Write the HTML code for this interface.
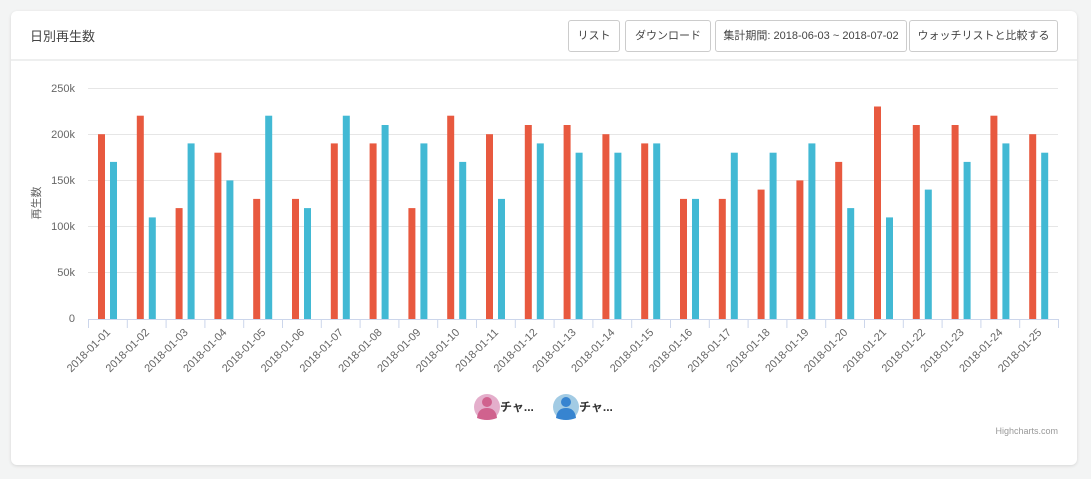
<!DOCTYPE html>
<html><head><meta charset="utf-8"><style>
body{margin:0;width:1091px;height:479px;background:#f3f4f4;font-family:"Liberation Sans","Noto Sans CJK JP",sans-serif;overflow:hidden;position:relative}
.card{position:absolute;left:11px;top:11px;width:1066px;height:454px;background:#fff;border-radius:6px;box-shadow:0 1px 3px rgba(0,0,0,.12)}
.hdr{height:48px;border-bottom:2px solid #eeefef;position:relative}
.title{position:absolute;left:19px;top:15px;font-size:13px;color:#444}
.btn{position:absolute;top:9px;height:32px;border:1px solid #ccc;border-radius:3px;font-size:11px;color:#444;line-height:30px;text-align:center;box-sizing:border-box;white-space:nowrap;overflow:hidden}
svg{position:absolute;left:0;top:0}
</style></head><body>
<div class="card"><div class="hdr"><div class="title">日別再生数</div>
<div class="btn" style="left:557px;width:52px">リスト</div>
<div class="btn" style="left:614px;width:86px">ダウンロード</div>
<div class="btn" style="left:704px;width:192px">集計期間: 2018-06-03 ~ 2018-07-02</div>
<div class="btn" style="left:898px;width:149px">ウォッチリストと比較する</div>
</div></div>
<svg width="1091" height="479" font-family="Liberation Sans, sans-serif">
<g stroke="#e6e6e6" stroke-width="1">
<line x1="88" x2="1058" y1="88.5" y2="88.5"/><line x1="88" x2="1058" y1="134.5" y2="134.5"/><line x1="88" x2="1058" y1="180.5" y2="180.5"/><line x1="88" x2="1058" y1="226.5" y2="226.5"/><line x1="88" x2="1058" y1="272.5" y2="272.5"/></g>
<g font-size="11" fill="#666" text-anchor="end">
<text x="75" y="92">250k</text><text x="75" y="138">200k</text><text x="75" y="184">150k</text><text x="75" y="230">100k</text><text x="75" y="276">50k</text><text x="75" y="322">0</text></g>
<text x="40" y="203" font-size="11" fill="#666" text-anchor="middle" transform="rotate(-90 40 203)" font-family="Liberation Sans, Noto Sans CJK JP, sans-serif">再生数</text>
<g fill="#e8593f">
<rect x="98" y="134.2" width="7" height="184.8"/><rect x="136.8" y="115.7" width="7" height="203.3"/><rect x="175.6" y="208.1" width="7" height="110.9"/><rect x="214.4" y="152.7" width="7" height="166.3"/><rect x="253.2" y="198.9" width="7" height="120.1"/><rect x="292" y="198.9" width="7" height="120.1"/><rect x="330.8" y="143.4" width="7" height="175.6"/><rect x="369.6" y="143.4" width="7" height="175.6"/><rect x="408.4" y="208.1" width="7" height="110.9"/><rect x="447.2" y="115.7" width="7" height="203.3"/><rect x="486" y="134.2" width="7" height="184.8"/><rect x="524.8" y="125" width="7" height="194"/><rect x="563.6" y="125" width="7" height="194"/><rect x="602.4" y="134.2" width="7" height="184.8"/><rect x="641.2" y="143.4" width="7" height="175.6"/><rect x="680" y="198.9" width="7" height="120.1"/><rect x="718.8" y="198.9" width="7" height="120.1"/><rect x="757.6" y="189.6" width="7" height="129.4"/><rect x="796.4" y="180.4" width="7" height="138.6"/><rect x="835.2" y="161.9" width="7" height="157.1"/><rect x="874" y="106.5" width="7" height="212.5"/><rect x="912.8" y="125" width="7" height="194"/><rect x="951.6" y="125" width="7" height="194"/><rect x="990.4" y="115.7" width="7" height="203.3"/><rect x="1029.2" y="134.2" width="7" height="184.8"/></g>
<g fill="#42b9d4">
<rect x="110" y="161.9" width="7" height="157.1"/><rect x="148.8" y="217.4" width="7" height="101.6"/><rect x="187.6" y="143.4" width="7" height="175.6"/><rect x="226.4" y="180.4" width="7" height="138.6"/><rect x="265.2" y="115.7" width="7" height="203.3"/><rect x="304" y="208.1" width="7" height="110.9"/><rect x="342.8" y="115.7" width="7" height="203.3"/><rect x="381.6" y="125" width="7" height="194"/><rect x="420.4" y="143.4" width="7" height="175.6"/><rect x="459.2" y="161.9" width="7" height="157.1"/><rect x="498" y="198.9" width="7" height="120.1"/><rect x="536.8" y="143.4" width="7" height="175.6"/><rect x="575.6" y="152.7" width="7" height="166.3"/><rect x="614.4" y="152.7" width="7" height="166.3"/><rect x="653.2" y="143.4" width="7" height="175.6"/><rect x="692" y="198.9" width="7" height="120.1"/><rect x="730.8" y="152.7" width="7" height="166.3"/><rect x="769.6" y="152.7" width="7" height="166.3"/><rect x="808.4" y="143.4" width="7" height="175.6"/><rect x="847.2" y="208.1" width="7" height="110.9"/><rect x="886" y="217.4" width="7" height="101.6"/><rect x="924.8" y="189.6" width="7" height="129.4"/><rect x="963.6" y="161.9" width="7" height="157.1"/><rect x="1002.4" y="143.4" width="7" height="175.6"/><rect x="1041.2" y="152.7" width="7" height="166.3"/></g>
<line x1="88" x2="1059" y1="319.5" y2="319.5" stroke="#ccd6eb"/>
<g stroke="#ccd6eb">
<line x1="88.5" x2="88.5" y1="319" y2="328"/><line x1="127.3" x2="127.3" y1="319" y2="328"/><line x1="166.1" x2="166.1" y1="319" y2="328"/><line x1="204.9" x2="204.9" y1="319" y2="328"/><line x1="243.7" x2="243.7" y1="319" y2="328"/><line x1="282.5" x2="282.5" y1="319" y2="328"/><line x1="321.3" x2="321.3" y1="319" y2="328"/><line x1="360.1" x2="360.1" y1="319" y2="328"/><line x1="398.9" x2="398.9" y1="319" y2="328"/><line x1="437.7" x2="437.7" y1="319" y2="328"/><line x1="476.5" x2="476.5" y1="319" y2="328"/><line x1="515.3" x2="515.3" y1="319" y2="328"/><line x1="554.1" x2="554.1" y1="319" y2="328"/><line x1="592.9" x2="592.9" y1="319" y2="328"/><line x1="631.7" x2="631.7" y1="319" y2="328"/><line x1="670.5" x2="670.5" y1="319" y2="328"/><line x1="709.3" x2="709.3" y1="319" y2="328"/><line x1="748.1" x2="748.1" y1="319" y2="328"/><line x1="786.9" x2="786.9" y1="319" y2="328"/><line x1="825.7" x2="825.7" y1="319" y2="328"/><line x1="864.5" x2="864.5" y1="319" y2="328"/><line x1="903.3" x2="903.3" y1="319" y2="328"/><line x1="942.1" x2="942.1" y1="319" y2="328"/><line x1="980.9" x2="980.9" y1="319" y2="328"/><line x1="1019.7" x2="1019.7" y1="319" y2="328"/><line x1="1058.5" x2="1058.5" y1="319" y2="328"/></g>
<g font-size="11" fill="#666" text-anchor="end">
<text x="111" y="333" transform="rotate(-45 111 333)">2018-01-01</text><text x="149.8" y="333" transform="rotate(-45 149.8 333)">2018-01-02</text><text x="188.6" y="333" transform="rotate(-45 188.6 333)">2018-01-03</text><text x="227.4" y="333" transform="rotate(-45 227.4 333)">2018-01-04</text><text x="266.2" y="333" transform="rotate(-45 266.2 333)">2018-01-05</text><text x="305" y="333" transform="rotate(-45 305 333)">2018-01-06</text><text x="343.8" y="333" transform="rotate(-45 343.8 333)">2018-01-07</text><text x="382.6" y="333" transform="rotate(-45 382.6 333)">2018-01-08</text><text x="421.4" y="333" transform="rotate(-45 421.4 333)">2018-01-09</text><text x="460.2" y="333" transform="rotate(-45 460.2 333)">2018-01-10</text><text x="499" y="333" transform="rotate(-45 499 333)">2018-01-11</text><text x="537.8" y="333" transform="rotate(-45 537.8 333)">2018-01-12</text><text x="576.6" y="333" transform="rotate(-45 576.6 333)">2018-01-13</text><text x="615.4" y="333" transform="rotate(-45 615.4 333)">2018-01-14</text><text x="654.2" y="333" transform="rotate(-45 654.2 333)">2018-01-15</text><text x="693" y="333" transform="rotate(-45 693 333)">2018-01-16</text><text x="731.8" y="333" transform="rotate(-45 731.8 333)">2018-01-17</text><text x="770.6" y="333" transform="rotate(-45 770.6 333)">2018-01-18</text><text x="809.4" y="333" transform="rotate(-45 809.4 333)">2018-01-19</text><text x="848.2" y="333" transform="rotate(-45 848.2 333)">2018-01-20</text><text x="887" y="333" transform="rotate(-45 887 333)">2018-01-21</text><text x="925.8" y="333" transform="rotate(-45 925.8 333)">2018-01-22</text><text x="964.6" y="333" transform="rotate(-45 964.6 333)">2018-01-23</text><text x="1003.4" y="333" transform="rotate(-45 1003.4 333)">2018-01-24</text><text x="1042.2" y="333" transform="rotate(-45 1042.2 333)">2018-01-25</text></g>
<circle cx="487" cy="407" r="13" fill="#e4aecb"/>
<circle cx="487" cy="402" r="5" fill="#d0628e"/><path d="M477 418 Q478 408 487 408 Q496 408 497 418 Q487 422 477 418Z" fill="#d0628e"/>
<circle cx="566" cy="407" r="13" fill="#a2cbe4"/>
<circle cx="566" cy="402" r="5" fill="#3784d0"/><path d="M556 418 Q557 408 566 408 Q575 408 576 418 Q566 422 556 418Z" fill="#3784d0"/>
<g font-size="12" font-weight="bold" fill="#333" font-family="Liberation Sans, Noto Sans CJK JP, sans-serif"><text x="500" y="411">チャ...</text><text x="579" y="411">チャ...</text></g>
<text x="1058" y="434" font-size="9" fill="#999" text-anchor="end">Highcharts.com</text>
</svg>
</body></html>
